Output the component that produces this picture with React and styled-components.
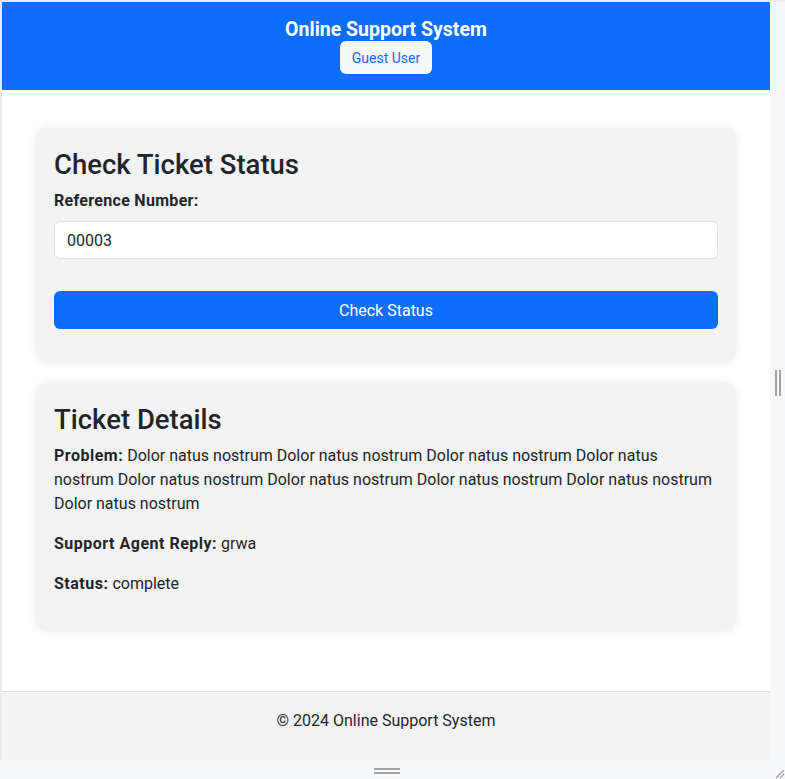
import React, { useState } from 'react';
import styled, { createGlobalStyle } from 'styled-components';

const GlobalStyle = createGlobalStyle`
  html, body {
    margin: 0;
    padding: 0;
    background: #f7f8fa;
  }
  * { box-sizing: border-box; }
`;

const Frame = styled.div`
  width: 785px;
  height: 779px;
  display: flex;
  flex-direction: column;
  background: #f7f8fa;
  overflow: hidden;
  font-family: Roboto, "Liberation Sans", sans-serif;
  color: #212529;
`;

const FrameRow = styled.div`
  display: flex;
  height: 760px;
  border-top: 2px solid #ebebef;
`;

const Viewport = styled.div`
  width: 770px;
  display: flex;
  flex-direction: column;
  background: #fff;
  border-left: 2px solid #ebebef;
`;

const Gutter = styled.div`
  flex: 1;
  display: flex;
  align-items: center;
  justify-content: center;
  padding-top: 4px;
`;

const VHandle = styled.div`
  width: 6px;
  height: 26px;
  border-left: 2px solid #a3a3a3;
  border-right: 2px solid #a3a3a3;
  margin-left: 1px;
`;

const BottomBar = styled.div`
  flex: 1;
  position: relative;
  display: flex;
  align-items: center;
  justify-content: center;
  padding-right: 12px;
`;

const HHandle = styled.div`
  width: 26px;
  height: 6px;
  border-top: 2px solid #a3a3a3;
  border-bottom: 2px solid #a3a3a3;
  margin-top: 2px;
`;

const Corner = styled.svg`
  position: absolute;
  right: 0;
  bottom: 0;
`;

const Header = styled.header`
  background: #0d6efd;
  color: #fff;
  text-align: center;
  padding: 17px 0 16px;
`;

const Brand = styled.h1`
  margin: 0;
  font-size: 19.5px;
  line-height: 22px;
  font-weight: 700;
`;

const UserButton = styled.button`
  height: 33px;
  padding: 0 12px;
  border: none;
  border-radius: 6px;
  background: #f8f9fa;
  color: #0d6efd;
  font-family: inherit;
  font-size: 14px;
  cursor: pointer;
`;

const Main = styled.main`
  flex: 1;
  padding: 38px 34px 0;
  display: flex;
  flex-direction: column;
  gap: 21px;
`;

const Card = styled.section`
  width: 700px;
  margin: 0 auto;
  background: #f3f3f3;
  border-radius: 10px;
  box-shadow: 0 0 10px rgba(0, 0, 0, 0.08);
  padding: 18px 18px ${({ $bottom }) => $bottom || 18}px;
`;

const CardTitle = styled.h2`
  margin: 0 0 5px;
  font-size: 27.5px;
  line-height: 38px;
  font-weight: 500;
`;

const Label = styled.label`
  display: block;
  font-weight: 700;
  font-size: 16px;
  letter-spacing: 0.3px;
  line-height: 24px;
  margin-bottom: 8px;
`;

const Input = styled.input`
  display: block;
  width: 100%;
  height: 38px;
  padding: 6px 12px;
  border: 1px solid #dee2e6;
  border-radius: 6px;
  background: #fff;
  font-family: inherit;
  font-size: 16px;
  color: #212529;
  outline: none;
`;

const SubmitButton = styled.button`
  display: block;
  width: 100%;
  height: 38px;
  margin-top: 32px;
  border: none;
  border-radius: 6px;
  background: #0d6efd;
  color: #fff;
  font-family: inherit;
  font-size: 16px;
  cursor: pointer;
`;

const Detail = styled.p`
  margin: 0 0 16px;
  font-size: 16px;
  line-height: 24px;
  &:last-child { margin-bottom: 0; }
  strong {
    font-weight: 700;
    letter-spacing: 0.5px;
  }
`;

const Footer = styled.footer`
  background: #f3f3f3;
  border-top: 1px solid #dcdcdc;
  text-align: center;
  padding: 17px 0 27px;
  font-size: 16px;
  line-height: 24px;
`;

const problem = Array(9).fill('Dolor natus nostrum').join(' ');

export default function App() {
  const [reference, setReference] = useState('00003');

  return (
    <>
      <GlobalStyle />
      <Frame>
        <FrameRow>
          <Viewport>
            <Header>
              <Brand>Online Support System</Brand>
              <UserButton>Guest User</UserButton>
            </Header>

            <Main>
              <Card $bottom={33}>
                <CardTitle>Check Ticket Status</CardTitle>
                <Label htmlFor="ref">Reference Number:</Label>
                <Input id="ref" value={reference} onChange={e => setReference(e.target.value)} />
                <SubmitButton>Check Status</SubmitButton>
              </Card>

              <Card $bottom={35}>
                <CardTitle>Ticket Details</CardTitle>
                <Detail><strong>Problem:</strong> {problem}</Detail>
                <Detail><strong>Support Agent Reply:</strong> grwa</Detail>
                <Detail><strong>Status:</strong> complete</Detail>
              </Card>
            </Main>

            <Footer>© 2024 Online Support System</Footer>
          </Viewport>
          <Gutter>
            <VHandle />
          </Gutter>
        </FrameRow>
        <BottomBar>
          <HHandle />
          <Corner width="12" height="12" viewBox="0 0 12 12">
            <path d="M11 3 L3 11 M11 7 L7 11" stroke="#a3a3a3" strokeWidth="1.2" />
          </Corner>
        </BottomBar>
      </Frame>
    </>
  );
}
